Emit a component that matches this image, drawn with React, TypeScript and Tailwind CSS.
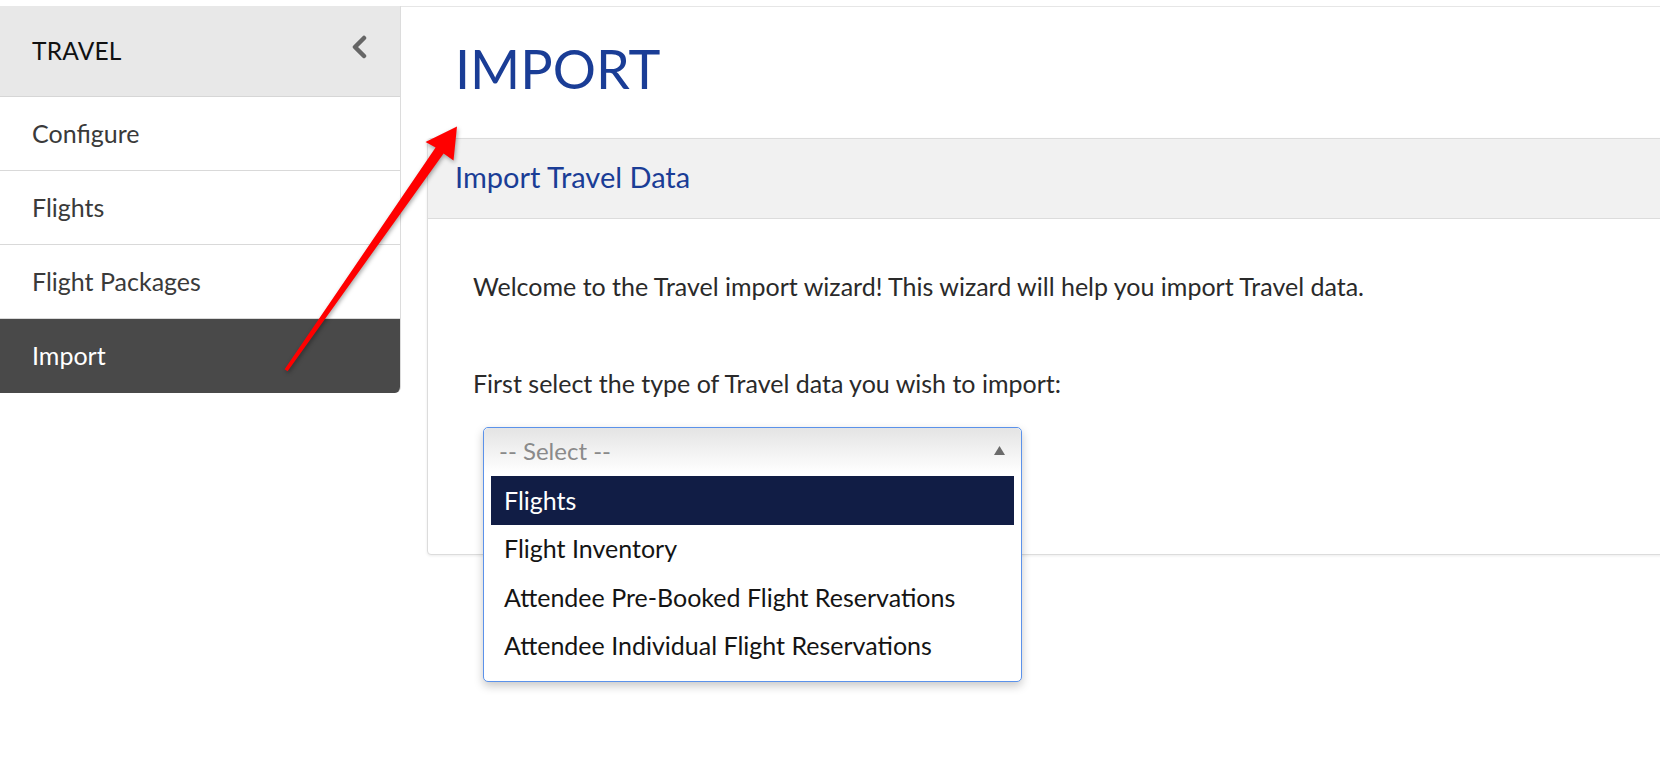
import { ReactNode } from 'react';

const navItems = ['Configure', 'Flights', 'Flight Packages', 'Import'];
const importTypes = [
  'Flights',
  'Flight Inventory',
  'Attendee Pre-Booked Flight Reservations',
  'Attendee Individual Flight Reservations',
];

function Sidebar({ active }: { active: string }) {
  return (
    <aside className="w-[401px] shrink-0 self-start border-r border-[#dcdcdc] rounded-br-[6px] overflow-hidden">
      <div className="h-[91px] bg-[#e8e8e8] border-b border-[#d6d6d6] flex items-center justify-between pl-[32px] pr-[33px]">
        <span className="text-[24.5px] text-[#111] tracking-[0.2px]">TRAVEL</span>
        <svg width="16" height="24" viewBox="0 0 16 24" className="-mt-[8px]">
          <polyline points="13,3 4,12 13,21" fill="none" stroke="#666" strokeWidth="4.5" strokeLinecap="round" strokeLinejoin="round" />
        </svg>
      </div>
      {navItems.map((item, i) => (
        <div
          key={item}
          className={`h-[74px] flex items-center pl-[32px] text-[25px] ${
            item === active ? 'bg-[#494949] text-white' : 'bg-white text-[#3a3a3a]'
          } ${i < navItems.length - 1 ? 'border-b border-[#d9d9d9]' : ''}`}
        >
          {item}
        </div>
      ))}
    </aside>
  );
}

function Card({ title, children }: { title: string; children: ReactNode }) {
  return (
    <section className="-mr-6 border border-[#dcdcdc] rounded-[4px] bg-white shadow-[0_1px_3px_rgba(0,0,0,0.08)]">
      <div className="h-[80px] bg-[#f1f1f1] border-b border-[#dcdcdc] flex items-center pl-[27px]">
        <h2 className="text-[29px] text-[#1a3d96] -mt-[3px]">{title}</h2>
      </div>
      {children}
    </section>
  );
}

// open select, list drawn over whatever sits below it
function OpenSelect({ options, highlighted }: { options: string[]; highlighted: string }) {
  return (
    <div className="relative ml-[10px] w-[539px] h-[46px]">
      <div className="absolute top-0 left-0 w-full z-10 bg-white border border-[#5b92ea] rounded-[5px] shadow-[0_4px_10px_rgba(0,0,0,0.22)] pb-[11px]">
        <div className="h-[45px] flex items-center justify-between pl-[15px] pr-[16px] rounded-t-[5px] bg-gradient-to-b from-[#e4e4e4] to-white">
          <span className="text-[24px] text-[#8a8a8a]">-- Select --</span>
          <svg width="11" height="9" viewBox="0 0 11 9">
            <polygon points="5.5,0 11,9 0,9" fill="#6b6b6b" />
          </svg>
        </div>
        <ul className="px-[7px] pt-[3px]">
          {options.map((opt) => (
            <li
              key={opt}
              className={`h-[48.5px] flex items-center pl-[13px] text-[25px] ${
                opt === highlighted ? 'bg-[#111d45] text-white' : 'text-[#141414]'
              }`}
            >
              {opt}
            </li>
          ))}
        </ul>
      </div>
    </div>
  );
}

export default function App() {
  return (
    <div className="relative w-[1660px] h-[772px] overflow-hidden bg-white pt-[6px] flex font-[Lato,sans-serif]">
      <Sidebar active="Import" />

      <main className="flex-1 min-w-0 border-t border-[#e6e6e6] pl-[26px]">
        <h1 className="mt-[34px] mb-[41px] ml-[28px] text-[54px] leading-[56px] text-[#1a3d96]">IMPORT</h1>

        <Card title="Import Travel Data">
          <div className="pt-[51px] pb-[81px] pl-[45px] text-[25px] text-[#2a2a2a]">
            <p className="leading-[32px]">
              Welcome to the Travel import wizard! This wizard will help you import Travel data.
            </p>
            <p className="mt-[65px] leading-[32px]">First select the type of Travel data you wish to import:</p>
            <div className="mt-[28px]">
              <OpenSelect options={importTypes} highlighted="Flights" />
            </div>
          </div>
        </Card>
      </main>

      {/* red callout arrow */}
      <svg
        className="absolute left-0 top-0 pointer-events-none drop-shadow-[1px_2px_2px_rgba(0,0,0,0.35)]"
        width="1660"
        height="772"
        viewBox="0 0 1660 772"
      >
        <polygon
          points="284.6,369.2 287.6,371.2 443.6,153.4 453.5,160.5 457,126.5 425.5,142 435.6,147.6"
          fill="#ff0000"
        />
      </svg>
    </div>
  );
}
